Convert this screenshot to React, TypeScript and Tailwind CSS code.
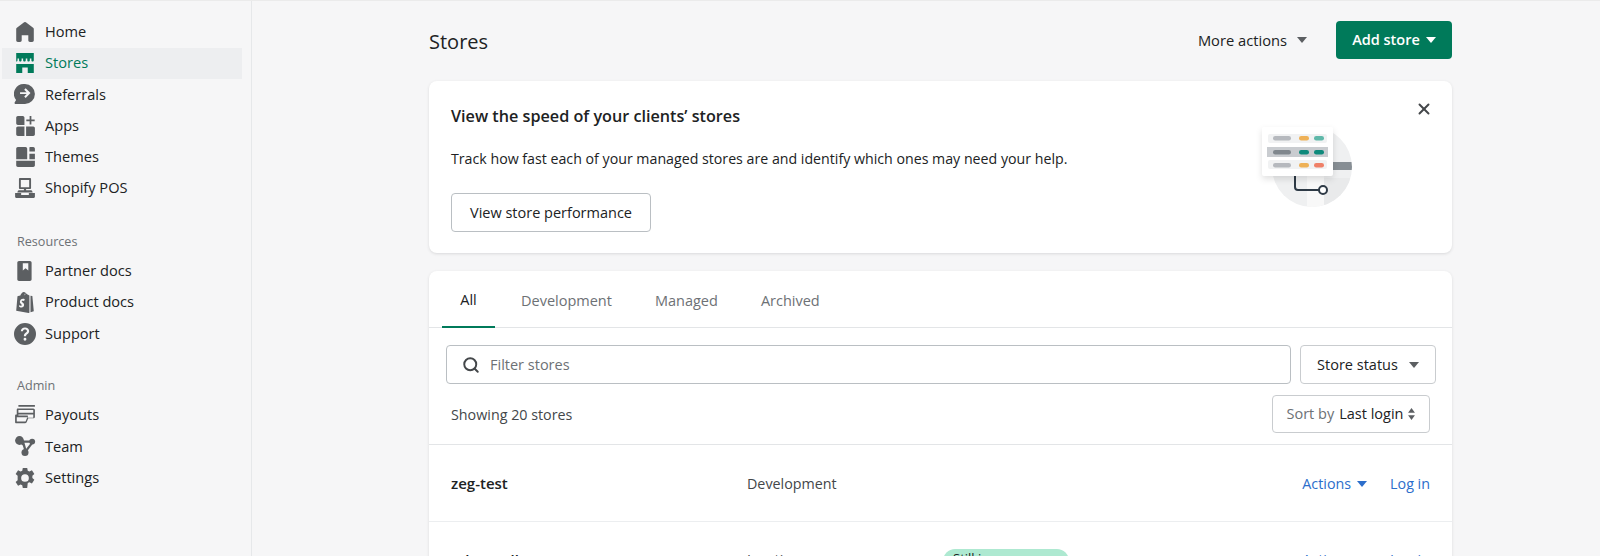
import { Search, X } from 'lucide-react'
import type { ReactNode } from 'react'

const font = { fontFamily: '"Open Sans", "Noto Sans", sans-serif' }

const Icon = ({ children, color = 'text-[#5c5f62]' }: { children: ReactNode; color?: string }) => (
  <svg viewBox="0 0 20 20" fill="currentColor" className={`w-[22px] h-[22px] shrink-0 ${color}`}>
    {children}
  </svg>
)

const icons = {
  home: <path d="M18 7.261V17.5c0 .841-.672 1.5-1.5 1.5h-2c-.828 0-1.5-.659-1.5-1.5V13H7v4.477C7 18.318 6.328 19 5.500 19h-2c-.828 0-1.500-.682-1.500-1.523V7.261a1.500 1.500 0 0 1 .615-1.210l6.590-4.820a1.481 1.481 0 0 1 1.590 0l6.590 4.820A1.500 1.500 0 0 1 18 7.260z" />,
  stores: (
    <path
      fillRule="evenodd"
      d="M2 1h16v6.500c0 .8-.5 1.200-1.100 1.200-.7 0-1.100-.4-1.100-1.200V6h-1.400v1.500c0 .8-.5 1.200-1.200 1.200s-1.100-.4-1.100-1.200V6h-1.400v1.500c0 .8-.500 1.200-1.200 1.200s-1.200-.4-1.200-1.200V6H6.900v1.500c0 .8-.5 1.200-1.100 1.200-.7 0-1.200-.4-1.200-1.200V6H3.200v1.500c0 .8-.5 1.200-1.200 1.200V1zM2 11h16v8h-5.500v-5h-5v5H2v-8z"
    />
  ),
  referrals: <path fillRule="evenodd" d="M10 1a9 9 0 0 1 0 18H1.500c-.9 0-1.300-.8-.8-1.500l1.200-2A9 9 0 0 1 10 1zm.6 3.800L9.300 6.100l2.200 2.200H5.500v1.800h6l-2.200 2.200 1.300 1.300 4.400-4.400-4.400-4.400z" />,
  apps: <path d="M2 2.500C2 1.700 2.700 1 3.500 1H8c.8 0 1.500.7 1.500 1.500V9H3.500C2.700 9 2 8.300 2 7.500V2.500zM2 12c0-.8.7-1.500 1.500-1.500h6V19h-6C2.700 19 2 18.300 2 17.500V12zM11 10.500h6.500c.8 0 1.500.7 1.500 1.500v5.500c0 .8-.7 1.500-1.500 1.500H11v-8.500zM14.200 1h1.600v3h3v1.600h-3v3h-1.600v-3h-3V4h3V1z" />,
  themes: <path d="M3.500 1h7c.8 0 1.500.7 1.500 1.500V12H2V2.500C2 1.700 2.700 1 3.500 1zM14.500 1h3c.8 0 1.500.7 1.500 1.500V5h-5V1.500c0-.3.2-.5.500-.5zM14 7h5v5h-5V7zM2 13.500h17v4c0 .8-.7 1.500-1.500 1.500h-14C2.700 19 2 18.300 2 17.500v-4z" />,
  pos: <path fillRule="evenodd" d="M5.500 1h9c.6 0 1 .4 1 1v8c0 .6-.4 1-1 1H11v1h4.500c.5 0 .9.300 1 .7l.5 1.300H3l.5-1.300c.1-.4.500-.7 1-.7H9v-1H5.500c-.6 0-1-.4-1-1V2c0-.6.4-1 1-1zM6.200 2.700v6.600h7.600V2.700H6.200zM1 14.500h5.500v1.800h7v-1.800H19V18c0 .6-.4 1-1 1H2c-.6 0-1-.4-1-1v-3.500z" />,
  partner: <path fillRule="evenodd" d="M4.500 1h10C15.300 1 16 1.700 16 2.500v15c0 .8-.7 1.500-1.500 1.500h-10C3.700 19 3 18.300 3 17.500v-15C3 1.700 3.700 1 4.500 1zM8 3v6.500l2.500-2 2.500 2V3H8z" />,
  product: <path fillRule="evenodd" d="M11.900 2.900c-.1-.4-.5-.7-1-.7-.3-.7-.9-1.400-1.900-1.400-1.500 0-2.700 1.700-3.200 3.200l-2 .6c-.6.200-.6.200-.7.800L2 18l11.300 2 .7-.2V4.100l-2.100-1.200zM9.900 4.100c-.5-1.400-.2-1.900.5-1.500l-.5 1.500zM15 4.300l1.500.3c.1 0 .2.100.2.200L18 18.500l-3 .9V4.300zM9.800 7.300l-.6 1.800s-.6-.3-1.200-.3c-1 0-1 .6-1 .8 0 .8 2.200 1.100 2.200 3 0 1.500-1 2.500-2.300 2.500-1.500 0-2.300-1-2.300-1l.4-1.400s.8.700 1.500.7c.4 0 .6-.3.600-.6 0-1-1.800-1.100-1.800-2.800C5.300 8.600 6.300 7 8.400 7c.8 0 1.400.3 1.400.3z" />,
  support: <path fillRule="evenodd" d="M10 0a10 10 0 1 0 0 20 10 10 0 0 0 0-20zm0 13.500a1.300 1.300 0 1 1 0 2.600 1.300 1.300 0 0 1 0-2.600zM10 4c2.200 0 3.800 1.400 3.800 3.300 0 1.500-.9 2.300-1.800 3-.7.500-1 .8-1 1.400v.3H9v-.4c0-1.400.8-2.100 1.600-2.700.7-.5 1.200-.9 1.200-1.600 0-.8-.8-1.400-1.800-1.400-1.100 0-1.800.6-1.900 1.600H6.200C6.300 5.400 7.800 4 10 4z" />,
  payouts: <path fillRule="evenodd" d="M4 1h15v1.500H4V1zM3.500 4h14c.8 0 1.500.7 1.500 1.500v6c0 .8-.7 1.500-1.500 1.500H13l-1.500 3.500c-.3.700-.8 1-1.500 1H2c-.6 0-1-.4-1-1v-6c0-.6.4-1 1-1h.5V5c0-.6.4-1 1-1zm.5 1.500V8h13.500V5.500H4zm0 4v1h8c.6 0 .8.500.6 1l-.2.900h5.100V9.500H4zM2.500 12v4h8l1.600-4H2.500z" />,
  team: (
    <>
      <circle cx="5" cy="5" r="4" />
      <circle cx="16.500" cy="6" r="2.700" />
      <circle cx="10" cy="16" r="3.200" />
      <path d="M8 5h7v2H9.500l1.700 6-2 .7L8 9.500 6 8z" />
      <path d="M15.400 7l1.500 1.200-5.200 7-1.700-1.300z" />
    </>
  ),
  settings: <path fillRule="evenodd" d="M8 1h4l.5 2.500 1.500.7 2.300-1.200 2.200 3.300-1.800 1.700v2l1.800 1.700-2.200 3.300-2.300-1.200-1.500.7L12 19H8l-.5-2.500-1.500-.7-2.300 1.200-2.200-3.300 1.800-1.700V10 8l-1.800-1.700L3.700 3l2.300 1.200 1.500-.7L8 1zm2 5.500a3.500 3.500 0 1 0 0 7 3.500 3.500 0 0 0 0-7z" />,
}

const NavRow = ({ icon, label, active }: { icon: ReactNode; label: string; active?: boolean }) => (
  <div className={`h-[31.2px] w-[240px] ml-[2px] flex items-center gap-[9px] pl-[12px] text-[14.6px] ${active ? 'bg-[#edeef0] text-[#007a5a]' : 'text-[#202223]'}`}>
    <Icon color={active ? 'text-[#007a5a]' : 'text-[#5c5f62]'}>{icon}</Icon>
    <span>{label}</span>
  </div>
)

const Caret = ({ className }: { className: string }) => (
  <svg viewBox="0 0 10 6" fill="currentColor" className={`w-[10px] h-[6px] ${className}`}>
    <path d="M0 0h10L5 6z" />
  </svg>
)

export default function App() {
  return (
    <div style={font} className="w-[1600px] h-[556px] overflow-hidden bg-[#f6f6f7] border-t border-[#ebebeb] flex text-[#202223] text-[14.5px]">
      {/* sidebar */}
      <aside className="w-[252px] shrink-0 border-r border-[#e6e8ea] pt-[15.5px]">
        <NavRow icon={icons.home} label="Home" />
        <NavRow icon={icons.stores} label="Stores" active />
        <NavRow icon={icons.referrals} label="Referrals" />
        <NavRow icon={icons.apps} label="Apps" />
        <NavRow icon={icons.themes} label="Themes" />
        <NavRow icon={icons.pos} label="Shopify POS" />
        <p className="mt-[28px] mb-[4px] pl-[17px] text-[12.6px] leading-[20px] text-[#6d7175]">Resources</p>
        <NavRow icon={icons.partner} label="Partner docs" />
        <NavRow icon={icons.product} label="Product docs" />
        <NavRow icon={icons.support} label="Support" />
        <p className="mt-[27px] mb-[3.5px] pl-[17px] text-[12.6px] leading-[20px] text-[#6d7175]">Admin</p>
        <NavRow icon={icons.payouts} label="Payouts" />
        <NavRow icon={icons.team} label="Team" />
        <NavRow icon={icons.settings} label="Settings" />
      </aside>

      {/* main */}
      <main className="flex-1 pl-[177px]">
        <div className="w-[1023px]">
          <div className="h-[80px] pt-[20px] flex items-start justify-between">
            <h1 className="text-[20px] leading-[42px] font-normal">Stores</h1>
            <div className="flex items-center">
              <div className="flex items-center gap-[10px] mr-[29px] pt-[1px] text-[14.7px]">
                <span>More actions</span>
                <Caret className="text-[#5c5f62]" />
              </div>
              <button className="w-[116px] h-[38px] rounded-[4px] bg-[#007a5a] text-white font-semibold flex items-center justify-center gap-[6px]">
                Add store
                <Caret className="text-white" />
              </button>
            </div>
          </div>

          {/* banner */}
          <section className="relative h-[172px] rounded-[8px] bg-white shadow-[0_1px_3px_rgba(63,63,68,0.15)] pt-[21px] pl-[22px]">
            <h2 className="text-[16.2px] font-semibold leading-[28px]">View the speed of your clients’ stores</h2>
            <p className="mt-[17px] leading-[24px] text-[14.2px]">Track how fast each of your managed stores are and identify which ones may need your help.</p>
            <button className="mt-[22px] h-[39px] w-[200px] rounded-[4px] border border-[#babfc3] bg-white font-medium">View store performance</button>
            <X className="absolute right-[19px] top-[19px] w-[18px] h-[18px] text-[#44474a]" strokeWidth={2.6} />
            <svg viewBox="0 0 100 90" className="absolute left-[827px] top-[42px] w-[100px] h-[90px]">
              <clipPath id="disc">
                <circle cx="56" cy="44" r="40" />
              </clipPath>
              <g clipPath="url(#disc)">
                <rect x="0" y="0" width="100" height="90" fill="#eff0f1" />
                <rect x="51" y="47" width="17" height="40" fill="#f8f8f8" />
                <rect x="68" y="55" width="30" height="32" fill="#e9eaeb" />
                <rect x="70" y="39" width="30" height="8" fill="#878e94" />
              </g>
              <path d="M39 50v14c0 2 1 3 3 3h21" stroke="#2e3a46" strokeWidth="2" fill="none" />
              <circle cx="67" cy="67" r="4" fill="#fff" stroke="#2e3a46" strokeWidth="2" />
              <g transform="translate(6 4)">
                <rect x="0" y="0" width="71" height="49" rx="2" fill="#fff" className="drop-shadow-md" />
                <rect x="6" y="7" width="59" height="9" rx="2" fill="#f1f2f3" />
                <rect x="5" y="20" width="61" height="10" fill="#c9ccd0" />
                <rect x="6" y="33" width="59" height="9" rx="2" fill="#f1f2f3" />
                <rect x="11" y="9" width="18" height="4.500" rx="2.200" fill="#b6b9be" />
                <rect x="37" y="9" width="10" height="4.500" rx="2.200" fill="#eeb157" />
                <rect x="52" y="9" width="10" height="4.500" rx="2.200" fill="#5fb8a9" />
                <rect x="11" y="23" width="18" height="4.500" rx="2.200" fill="#80878d" />
                <rect x="37" y="23" width="10" height="4.500" rx="2.200" fill="#0f8a7c" />
                <rect x="52" y="23" width="10" height="4.500" rx="2.200" fill="#0f8a7c" />
                <rect x="11" y="36" width="18" height="4.500" rx="2.200" fill="#b6b9be" />
                <rect x="37" y="36" width="10" height="4.500" rx="2.200" fill="#eeb157" />
                <rect x="52" y="36" width="10" height="4.500" rx="2.200" fill="#ef8068" />
              </g>
            </svg>
          </section>

          {/* stores list */}
          <section className="mt-[18px] rounded-t-[8px] bg-white shadow-[0_1px_3px_rgba(63,63,68,0.15)] h-[400px]">
            <div className="h-[57px] border-b border-[#e3e5e7] flex pl-[13px]">
              <div className="w-[53px] h-[57px] pt-[2px] border-b-2 border-[#007a5a] flex items-center justify-center">All</div>
              <div className="h-[57px] pt-[2px] flex items-center gap-[43px] pl-[26px] text-[#6d7175]">
                <span>Development</span>
                <span>Managed</span>
                <span>Archived</span>
              </div>
            </div>

            <div className="pt-[17px] pl-[17px] pr-[16px] flex gap-[9px]">
              <div className="flex-1 h-[39px] rounded-[4px] border border-[#babfc3] flex items-center gap-[10px] pl-[15px] text-[#6d7175]">
                <Search className="w-[18px] h-[18px] text-[#44474a]" strokeWidth={2.6} />
                <span>Filter stores</span>
              </div>
              <button className="w-[136px] h-[39px] rounded-[4px] border border-[#c9cccf] flex items-center justify-center gap-[11px] font-medium">
                Store status
                <Caret className="text-[#5c5f62]" />
              </button>
            </div>

            <div className="mt-[11px] h-[50px] pl-[22px] pr-[22px] flex items-start justify-between border-b border-[#e3e5e7]">
              <span className="leading-[40px] text-[14.3px] text-[#44474a]">Showing 20 stores</span>
              <button className="w-[158px] h-[38px] rounded-[4px] border border-[#c9cccf] flex items-center justify-center gap-[5px]">
                <span className="text-[#6d7175]">Sort by</span>
                <span>Last login</span>
                <svg viewBox="0 0 8 14" fill="currentColor" className="w-[7px] h-[12px] text-[#5c5f62]">
                  <path d="M4 0l4 5.500H0zM4 14L0 8.500h8z" />
                </svg>
              </button>
            </div>

            <div className="h-[77px] pl-[22px] pr-[22px] pt-[1px] flex items-center border-b border-[#eceef0]">
              <span className="w-[296px] text-[15px] font-semibold">zeg-test</span>
              <span className="flex-1 text-[14.3px] text-[#44474a]">Development</span>
              <span className="flex items-center gap-[6px] text-[14.3px] text-[#2c6ecb]">
                Actions
                <Caret className="text-[#2c6ecb]" />
              </span>
              <span className="ml-[23px] text-[14.3px] text-[#2c6ecb]">Log in</span>
            </div>

            <div className="h-[77px] pl-[22px] pr-[22px] flex items-start pt-[27px]">
              <span className="w-[296px] text-[15px] font-semibold leading-[22px]">Who Well</span>
              <span className="w-[196px] text-[14.3px] text-[#44474a] leading-[22px]">Inactive</span>
              <span className="h-[24px] w-[126px] rounded-full bg-[#aee9d1] text-[13px] pl-[10px]">Still in progress</span>
              <span className="ml-auto flex items-center gap-[6px] text-[14.3px] leading-[22px] text-[#2c6ecb]">
                Actions
                <Caret className="text-[#2c6ecb]" />
              </span>
              <span className="ml-[23px] text-[14.3px] text-[#2c6ecb] leading-[22px]">Log in</span>
            </div>
          </section>
        </div>
      </main>
    </div>
  )
}
